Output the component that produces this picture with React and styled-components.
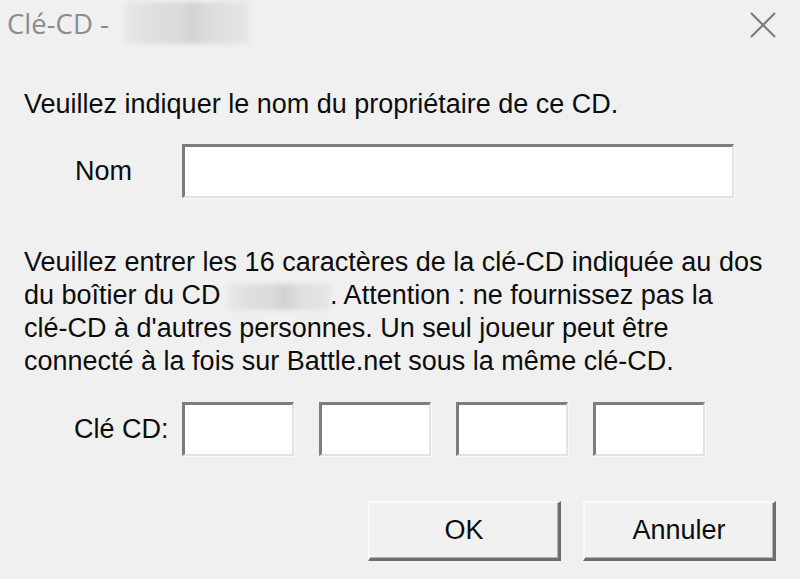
import React from "react";
import styled, { createGlobalStyle } from "styled-components";

const Global = createGlobalStyle`
  html, body { margin: 0; padding: 0; background: #f0f0f0; }
  * { box-sizing: border-box; }
`;

const Window = styled.div`
  width: 800px;
  height: 579px;
  background: #f0f0f0;
  display: flex;
  flex-direction: column;
  font-family: "Liberation Sans", Arial, sans-serif;
  font-size: 27px;
  color: #0c0c0c;
  overflow: hidden;
`;

const TitleBar = styled.div`
  height: 50px;
  display: flex;
  align-items: center;
  padding-left: 7px;
`;

const Title = styled.span`
  font-family: "Open Sans", "Noto Sans", sans-serif;
  font-size: 27.5px;
  color: #8c8c8c;
  line-height: 1;
  margin-top: -2px;
`;

const Redacted = styled.span`
  display: inline-block;
  width: ${(p) => p.$w}px;
  height: ${(p) => p.$h}px;
  margin-left: ${(p) => p.$ml || 0}px;
  vertical-align: middle;
  background: linear-gradient(
    90deg,
    #e8e8e8 0%,
    #e0e0e0 20%,
    #dadada 45%,
    #d2d2d2 55%,
    #dedede 70%,
    #e6e6e6 100%
  );
  filter: blur(2px);
`;

const TitleRedacted = styled(Redacted)`
  align-self: flex-start;
  margin-top: 2px;
`;

const Spacer = styled.div`
  flex: 1;
`;

const CloseButton = styled.div`
  width: 50px;
  height: 50px;
  margin-right: 12px;
  display: flex;
  align-items: center;
  justify-content: center;
`;

const Content = styled.div`
  padding: 0 24px;
  display: flex;
  flex-direction: column;
`;

const Prompt = styled.div`
  margin-top: 38px;
  line-height: 33px;
  white-space: nowrap;
`;

const Row = styled.div`
  display: flex;
  align-items: center;
  margin-top: ${(p) => p.$mt}px;
`;

const Label = styled.div`
  width: 158px;
  padding-left: ${(p) => p.$pl}px;
  line-height: 33px;
  white-space: nowrap;
`;

const Field = styled.div`
  width: ${(p) => p.$w}px;
  height: 54px;
  background: #fff;
  border-top: 3px solid #7d7d7d;
  border-left: 3px solid #7d7d7d;
  border-right: 2px solid #e2e2e2;
  border-bottom: 2px solid #e2e2e2;
  box-shadow: 1px 1px 0 #fafafa;
`;

const KeyFields = styled.div`
  display: flex;
  gap: 25px;
`;

const Paragraph = styled.div`
  margin-top: 48px;
  line-height: 33px;
  white-space: nowrap;
`;

const Buttons = styled.div`
  margin-top: 45px;
  display: flex;
  justify-content: flex-end;
  gap: 22px;
`;

const Button = styled.div`
  width: 193px;
  height: 60px;
  background: #f1f1f1;
  border-top: 2px solid #fbfbfb;
  border-left: 2px solid #fbfbfb;
  border-right: 3px solid #6e6e6e;
  border-bottom: 3px solid #6e6e6e;
  box-shadow: inset -1px -1px 0 #b4b4b4;
  display: flex;
  align-items: center;
  justify-content: center;
  line-height: 1;
`;

export default function App() {
  return (
    <>
      <Global />
      <Window>
        <TitleBar>
          <Title>Clé-CD -</Title>
          <TitleRedacted $w={124} $h={42} $ml={16} />
          <Spacer />
          <CloseButton>
            <svg width="28" height="28" viewBox="0 0 28 28">
              <path
                d="M2 2 L26 26 M26 2 L2 26"
                stroke="#7a7a7a"
                strokeWidth="2"
                fill="none"
              />
            </svg>
          </CloseButton>
        </TitleBar>
        <Content>
          <Prompt>Veuillez indiquer le nom du propriétaire de ce CD.</Prompt>
          <Row $mt={23}>
            <Label $pl={51}>Nom</Label>
            <Field $w={552} />
          </Row>
          <Paragraph>
            Veuillez entrer les 16 caractères de la clé-CD indiquée au dos
            <br />
            du boîtier du CD <Redacted $w={102} $h={26} />. Attention : ne
            fournissez pas la
            <br />
            clé-CD à d'autres personnes. Un seul joueur peut être
            <br />
            connecté à la fois sur Battle.net sous la même clé-CD.
          </Paragraph>
          <Row $mt={24}>
            <Label $pl={50}>Clé CD:</Label>
            <KeyFields>
              <Field $w={112} />
              <Field $w={112} />
              <Field $w={112} />
              <Field $w={112} />
            </KeyFields>
          </Row>
          <Buttons>
            <Button>OK</Button>
            <Button>Annuler</Button>
          </Buttons>
        </Content>
      </Window>
    </>
  );
}
